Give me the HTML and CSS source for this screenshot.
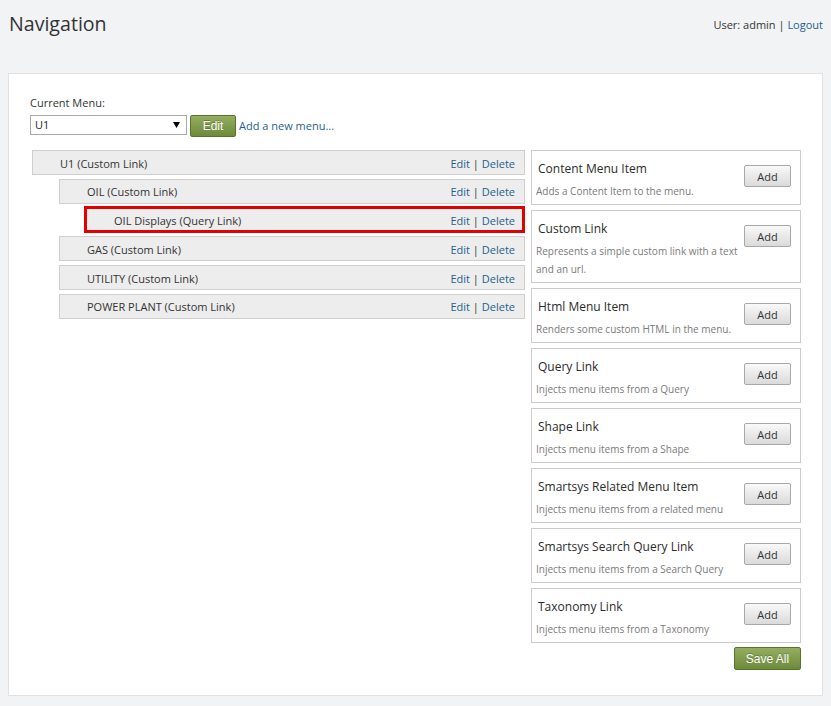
FILE: index.html
```html
<!DOCTYPE html>
<html lang="en">
<head>
<meta charset="utf-8">
<title>Navigation</title>
<link rel="stylesheet" href="styles.css">
</head>
<body>
<header class="top">
  <h1 class="title">Navigation</h1>
  <div class="user">User: admin | <a class="link" href="#">Logout</a></div>
</header>
<main class="panel">
  <div class="picker">
    <label class="picker-label">Current Menu:</label>
    <div class="picker-row">
      <div class="select">
        <span class="select-value">U1</span>
        <svg class="select-arrow" width="7" height="6" viewBox="0 0 7 6"><polygon points="0,0 7,0 3.5,6" fill="#000"/></svg>
      </div>
      <button class="btn-green btn-edit">Edit</button>
      <a class="link new-menu" href="#">Add a new menu...</a>
    </div>
  </div>
  <div class="columns">
    <ol class="tree">
      <li>
        <div class="row"><span class="row-label">U1 (Custom Link)</span><span class="row-actions"><a class="link" href="#">Edit</a> | <a class="link" href="#">Delete</a></span></div>
        <ol class="tree-children">
          <li>
            <div class="row"><span class="row-label">OIL (Custom Link)</span><span class="row-actions"><a class="link" href="#">Edit</a> | <a class="link" href="#">Delete</a></span></div>
            <ol class="tree-children">
              <li>
                <div class="row row-marked"><span class="row-label">OIL Displays (Query Link)</span><span class="row-actions"><a class="link" href="#">Edit</a> | <a class="link" href="#">Delete</a></span></div>
              </li>
            </ol>
          </li>
          <li>
            <div class="row"><span class="row-label">GAS (Custom Link)</span><span class="row-actions"><a class="link" href="#">Edit</a> | <a class="link" href="#">Delete</a></span></div>
          </li>
          <li>
            <div class="row"><span class="row-label">UTILITY (Custom Link)</span><span class="row-actions"><a class="link" href="#">Edit</a> | <a class="link" href="#">Delete</a></span></div>
          </li>
          <li>
            <div class="row"><span class="row-label">POWER PLANT (Custom Link)</span><span class="row-actions"><a class="link" href="#">Edit</a> | <a class="link" href="#">Delete</a></span></div>
          </li>
        </ol>
      </li>
    </ol>
    <div class="types">
      <div class="box">
        <div class="box-text"><h2 class="box-title">Content Menu Item</h2><p class="box-desc">Adds a Content Item to the menu.</p></div>
        <button class="btn-add">Add</button>
      </div>
      <div class="box">
        <div class="box-text"><h2 class="box-title">Custom Link</h2><p class="box-desc">Represents a simple custom link with a text and an url.</p></div>
        <button class="btn-add">Add</button>
      </div>
      <div class="box">
        <div class="box-text"><h2 class="box-title">Html Menu Item</h2><p class="box-desc">Renders some custom HTML in the menu.</p></div>
        <button class="btn-add">Add</button>
      </div>
      <div class="box">
        <div class="box-text"><h2 class="box-title">Query Link</h2><p class="box-desc">Injects menu items from a Query</p></div>
        <button class="btn-add">Add</button>
      </div>
      <div class="box">
        <div class="box-text"><h2 class="box-title">Shape Link</h2><p class="box-desc">Injects menu items from a Shape</p></div>
        <button class="btn-add">Add</button>
      </div>
      <div class="box">
        <div class="box-text"><h2 class="box-title">Smartsys Related Menu Item</h2><p class="box-desc">Injects menu items from a related menu</p></div>
        <button class="btn-add">Add</button>
      </div>
      <div class="box">
        <div class="box-text"><h2 class="box-title">Smartsys Search Query Link</h2><p class="box-desc">Injects menu items from a Search Query</p></div>
        <button class="btn-add">Add</button>
      </div>
      <div class="box">
        <div class="box-text"><h2 class="box-title">Taxonomy Link</h2><p class="box-desc">Injects menu items from a Taxonomy</p></div>
        <button class="btn-add">Add</button>
      </div>
      <div class="actions"><button class="btn-green btn-save">Save All</button></div>
    </div>
  </div>
</main>
</body>
</html>
```

FILE: styles.css
```css
* { box-sizing: border-box; }

body {
  margin: 0;
  background: #f2f3f5;
  font-family: "Open Sans", "Noto Sans", sans-serif;
  color: #333;
}

.link {
  color: #1f5f8c;
  text-decoration: none;
}

.top {
  height: 73px;
  display: flex;
  justify-content: space-between;
  align-items: flex-start;
  padding: 0 8px 0 9px;
}

.title {
  margin: 0;
  padding-top: 11px;
  font-size: 19.6px;
  line-height: 26px;
  font-weight: 400;
  color: #333;
}

.user {
  padding-top: 17px;
  font-size: 11px;
  line-height: 16px;
  color: #333;
}

.panel {
  margin: 0 8px;
  background: #fff;
  border: 1px solid #e1e2e4;
  padding: 21px 20px 25px 21px;
}

.picker-label {
  display: block;
  font-size: 11px;
  line-height: 16px;
  margin-bottom: 4px;
  color: #333;
}

.picker-row {
  display: flex;
  align-items: flex-start;
  gap: 3px;
}

.select {
  position: relative;
  width: 157px;
  height: 20px;
  border: 1px solid #a9a9a9;
  background: #fff;
  font-size: 11px;
  line-height: 18px;
  padding-left: 4px;
  color: #222;
}

.select-arrow {
  position: absolute;
  right: 6px;
  top: 6px;
}

.btn-green {
  font-family: "Liberation Sans", Arial, sans-serif;
  font-size: 12px;
  color: #fff;
  background: linear-gradient(#93ae5e, #6c8b3a);
  border: 1px solid #58732e;
  border-radius: 2px;
  text-shadow: 0 -1px 0 rgba(0, 0, 0, 0.25);
  padding: 0;
  cursor: pointer;
}

.btn-edit {
  width: 46px;
  height: 22px;
}

.new-menu {
  align-self: center;
  font-size: 11px;
  line-height: 16px;
}

.columns {
  display: flex;
  align-items: flex-start;
  gap: 6px;
  margin-top: 13px;
}

.tree {
  list-style: none;
  margin: 0 0 0 2px;
  padding: 0;
  width: 493px;
  flex: none;
}

.tree-children {
  list-style: none;
  margin: 0 0 0 27px;
  padding: 0;
}

.row {
  height: 25px;
  border: 1px solid #cfcfcf;
  background: #ededed;
  display: flex;
  justify-content: space-between;
  align-items: center;
  padding: 1px 9px 0 27px;
  margin-bottom: 3.75px;
  font-size: 11px;
  color: #333;
}

.row-marked {
  position: relative;
}

.row-marked::after {
  content: "";
  position: absolute;
  left: -3px;
  top: -3px;
  right: -1px;
  bottom: -1px;
  border: 3px solid #e30000;
}

.types {
  width: 270px;
  flex: none;
}

.box {
  display: flex;
  align-items: flex-start;
  border: 1px solid #cccccc;
  padding: 8px 9px 4px 4px;
  margin-bottom: 5px;
  background: #fff;
}

.box-text {
  flex: 1;
  min-width: 0;
}

.box-title {
  margin: 0 0 3px 2px;
  font-size: 12px;
  line-height: 20px;
  font-weight: 400;
  color: #2b2b2b;
}

.box-desc {
  margin: 0;
  font-size: 10px;
  line-height: 18px;
  color: #7a7a7a;
}

.btn-add {
  flex: none;
  margin-top: 6px;
  width: 47px;
  height: 22px;
  padding: 0;
  font-family: "Open Sans", "Noto Sans", sans-serif;
  font-size: 11px;
  color: #333;
  background: linear-gradient(#f9f9f9, #dadada);
  border: 1px solid #a8a8a8;
  border-radius: 2px;
  cursor: pointer;
}

.actions {
  display: flex;
  justify-content: flex-end;
  margin-top: -1px;
}

.btn-save {
  width: 67px;
  height: 23px;
}
```
